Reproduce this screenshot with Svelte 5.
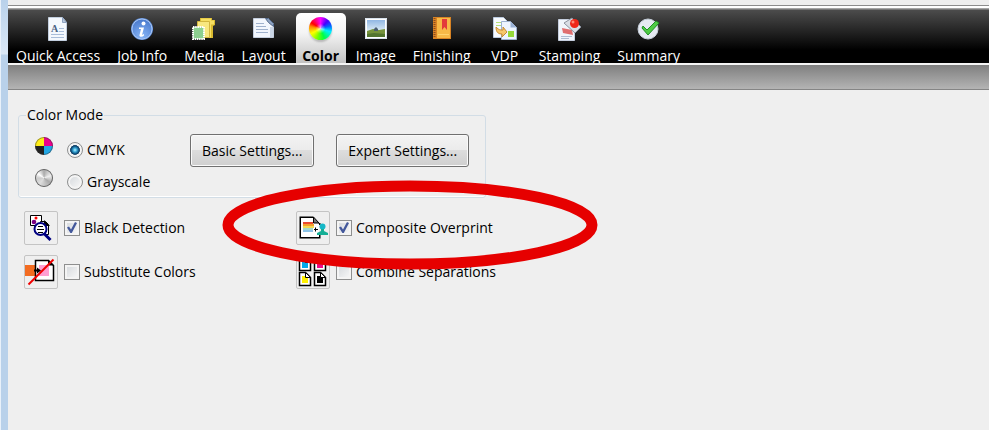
<script lang="ts">
	type Tab = { id: string; label: string }
	type Feature = { id: string; label: string }

	const tabs: Tab[] = [
		{ id: 'quick', label: 'Quick Access' },
		{ id: 'job', label: 'Job Info' },
		{ id: 'media', label: 'Media' },
		{ id: 'layout', label: 'Layout' },
		{ id: 'color', label: 'Color' },
		{ id: 'image', label: 'Image' },
		{ id: 'finishing', label: 'Finishing' },
		{ id: 'vdp', label: 'VDP' },
		{ id: 'stamping', label: 'Stamping' },
		{ id: 'summary', label: 'Summary' }
	]

	const features: Feature[] = [
		{ id: 'black', label: 'Black Detection' },
		{ id: 'overprint', label: 'Composite Overprint' },
		{ id: 'substitute', label: 'Substitute Colors' },
		{ id: 'separations', label: 'Combine Separations' }
	]

	let active = $state('color')
	let mode = $state('cmyk')
	let enabled = $state<Record<string, boolean>>({
		black: true,
		overprint: true,
		substitute: false,
		separations: false
	})
</script>

{#snippet tabIcon(id: string)}
	<svg viewBox="0 0 24 24" aria-hidden="true">
		{#if id === 'quick'}
			<path d="M2.5 .5h14l4 5v18h-18z" fill="#f4f8fd" stroke="#c3cfdf" />
			<path d="M16.5 .5v5h4z" fill="#b9c9df" stroke="#8fa3c0" />
			<text x="5" y="15" font-family="Liberation Serif, serif" font-size="10" font-weight="bold" fill="#4b6384">A</text>
			<path d="M13 11.5h5M13 14.5h5M5 17.5h13M5 20.5h13" stroke="#a9bdd9" />
		{:else if id === 'job'}
			<circle cx="12" cy="12" r="11" fill="#5f8fdb" />
			<circle cx="12" cy="12" r="10" fill="url(#info)" stroke="#a9c6f4" />
			<circle cx="13.5" cy="6.5" r="2" fill="#fff" />
			<path d="M9 10.5h5l-2 7.5 2-1v1.5c-2 2-5 1.5-4.5-.5l1.5-6H9z" fill="#fff" />
		{:else if id === 'media'}
			<path d="M8 1h12v2h3v5l-2 1v12H8z" fill="#d8b92f" />
			<path d="M9 1.5h10v2h3v4h-3v13H9z" fill="#f6df63" />
			<path d="M5.5 4.5h12v16h-12z" fill="#f8e780" stroke="#d2b640" />
			<path d="M1 10h11v12H1z" fill="#8ccf8f" />
			<path d="M1 10h11v12H1z" fill="none" stroke="#fff" stroke-width="2" stroke-dasharray="1.5 .7" />
		{:else if id === 'layout'}
			<path d="M1.5 1.5h15l5 5v14h-20z" fill="#f2f6fd" stroke="#c4cede" />
			<path d="M13.500 1.5h3l5 5v3l-5-4z" fill="#8da2c1" stroke="#53698a" />
			<path d="M4 6.5h8M4 9.5h10M4 12.5h12M4 15.500h12" stroke="#9fb1cd" />
			<path d="M19.5 10v10" stroke="#cbd6e6" stroke-width="3" />
		{:else if id === 'image'}
			<path d="M1 1h22v21H1z" fill="#fff" />
			<path d="M3 3h18v11H3z" fill="url(#sky)" />
			<path d="M3 14l6-2 6 1 6-1v8H3z" fill="#76933c" />
			<path d="M3 17l7-1 11 1v3H3z" fill="#52752f" />
			<path d="M10 14v-2l2-2 2 2v2z" fill="#4a5f70" />
			<path d="M1.5 1.5h21v20h-21z" fill="none" stroke="#d8e2ec" />
		{:else if id === 'finishing'}
			<path d="M3 0h18v22H3z" fill="#d98424" />
			<path d="M7 1h13v20H7z" fill="#f7b947" />
			<path d="M4.5 1v20" stroke="#8c4a1d" stroke-width="2" stroke-dasharray="1 1" />
			<path d="M8 17.5h11" stroke="#ffd36f" />
			<path d="M12 2h5v11l-2.500-3L12 13z" fill="#e33b3b" />
		{:else if id === 'vdp'}
			<path d="M.5 .5h10l4 4v16H.5z" fill="#f8fbff" stroke="#bccbe0" />
			<path d="M3 5.5h6M3 8.5h5" stroke="#b7e079" />
			<path d="M8.5 4.500h9l6 6v12h-15z" fill="#edf4ff" stroke="#9eb2d0" />
			<path d="M17.5 4.5v6h6z" fill="#9ab1d5" />
			<path d="M15 14h6v6h-6z" fill="#96d93c" />
			<path d="M3 10c0 6 3 7 6 7v3l5-5-4-5v3c-3 0-4 0-7-3z" fill="#f6c76c" stroke="#c78b31" />
		{:else if id === 'stamping'}
			<path d="M1.5 2.5h16v21h-16z" fill="#f1f5fb" stroke="#c5cede" />
			<path d="M5 11l10 2 1 5-10-2z" fill="#e06f6f" />
			<path d="M4 19.500h11M4 21.500h8" stroke="#aebdd2" />
			<path d="M7 6l8-5 9 9-6 6z" fill="#d9dde4" stroke="#8b929f" />
			<circle cx="17.5" cy="6.5" r="4.5" fill="#ef2718" />
			<circle cx="16" cy="5" r="1.5" fill="#ff8b76" />
		{:else if id === 'summary'}
			<circle cx="11" cy="12" r="10" fill="#e6eaf2" stroke="#c4cdd8" />
			<path d="M6 9l4 4 9-9 3 2-11 12-6-7z" fill="#4ecb45" stroke="#218d27" />
		{/if}
	</svg>
{/snippet}

{#snippet featureIcon(id: string)}
	<svg viewBox="0 0 32 32" aria-hidden="true">
		{#if id === 'black'}
			<path d="M5.5 3.5h11v10h-11z" fill="#fff" stroke="#000" />
			<path d="M15.5 9.5h5l3 3v10h-8z" fill="#fff" stroke="#000" />
			<path d="M19 8l6 6h-6z" />
			<circle cx="11" cy="6" r="1.5" fill="#f00" />
			<circle cx="9" cy="10" r="2.3" fill="#7b0084" />
			<path d="M19 21.500l6.500 6.500" stroke="#000080" stroke-width="3" />
			<circle cx="15.5" cy="17" r="6" fill="#fff" stroke="#000080" stroke-width="2" />
			<path d="M13 14.5h5M12 17.5h7M13 20.500h5" stroke="#000" />
		{:else if id === 'overprint'}
			<path d="M22.5 11v2M22.500 22v3.500h-19v-20h13" fill="none" stroke="#000" stroke-width="2" />
			<path d="M4 6h12l6 6v13H4z" fill="#fff" />
			<path d="M16.5 5l5.500 6h-5.500z" fill="#777" stroke="#000" />
			<path d="M6 10h10v2H6z" fill="#e94b32" />
			<path d="M6 12h11v2H6z" fill="#f5a12c" />
			<path d="M6 14h11v2H6z" fill="#f1db55" />
			<path d="M6 16h10v2H6z" fill="#a4dacc" />
			<path d="M6 18h10v2H6z" fill="#8bc3e7" />
			<path d="M17 17.500h4M18.500 15.500v4" stroke="#000" />
			<g fill="#15b7c7">
				<circle cx="25.500" cy="14.500" r="3" />
				<path d="M24 17h3v2l4 2v2H20v-2l4-2z" fill="#16af96" />
			</g>
		{:else if id === 'substitute'}
			<path d="M0 9h12v11H0z" fill="#f36c21" />
			<path d="M10.5 4.5h13l5 5v15h-18z" fill="#fff" stroke="#000" stroke-width="1.5" />
			<path d="M23 4v5.5h6z" />
			<path d="M14 9h10v11H14z" fill="#ff9fd2" />
			<path d="M9 14.5h4" stroke="#000" stroke-width="2" />
			<path d="M12 11.500l4 3-4 3z" />
			<path d="M3.5 28.5l25-25" stroke="#f00000" stroke-width="2" />
		{:else}
			{#each [['#00a9ec', 2, 1], ['#ed0b86', 17, 1], ['#fff000', 2, 16], ['#000', 17, 16]] as [fill, x, y]}
				<g transform="translate({x} {y})">
					<path d="M.5 .5h6l5 5v8H.5z" fill="#fff" stroke="#000" stroke-width="1.5" />
					<path d="M3 4h6v7H3z" {fill} />
					<path d="M6.5 .5v5h5z" fill="#fff" stroke="#000" />
				</g>
			{/each}
		{/if}
	</svg>
{/snippet}

<!-- shared gradients for the tab icons -->
<svg class="defs" aria-hidden="true">
	<defs>
		<radialGradient id="info" cx="50%" cy="85%" r="85%">
			<stop offset="0" stop-color="#87b5f7" />
			<stop offset="1" stop-color="#4778cc" />
		</radialGradient>
		<linearGradient id="sky" x1="0" y1="0" x2="0" y2="1">
			<stop offset="0" stop-color="#91b7e3" />
			<stop offset="1" stop-color="#dcecf6" />
		</linearGradient>
	</defs>
</svg>

<div class="window">
	<nav class="toolbar">
		{#each tabs as tab}
			<button
				type="button"
				class="tab"
				class:active={active === tab.id}
				aria-pressed={active === tab.id}
				onclick={() => (active = tab.id)}
			>
				{#if tab.id === 'color'}
					<span class="wheel"></span>
				{:else}
					{@render tabIcon(tab.id)}
				{/if}
				<span>{tab.label}</span>
			</button>
		{/each}
	</nav>
	<div class="subbar"></div>

	<main>
		<fieldset>
			<legend>Color Mode</legend>
			<div class="modes">
				<label>
					<span class="swatch cmyk"></span>
					<input type="radio" name="mode" value="cmyk" bind:group={mode} />
					CMYK
				</label>
				<label>
					<span class="swatch gray"></span>
					<input type="radio" name="mode" value="gray" bind:group={mode} />
					Grayscale
				</label>
			</div>
			<div class="settings">
				<button type="button">Basic Settings...</button>
				<button type="button">Expert Settings...</button>
			</div>
		</fieldset>

		<div class="features">
			{#each features as feature}
				<div class="feature">
					<button type="button" class="tool" aria-label={feature.label}>
						{@render featureIcon(feature.id)}
					</button>
					<label>
						<input type="checkbox" bind:checked={enabled[feature.id]} />
						{feature.label}
					</label>
				</div>
			{/each}
		</div>

		<svg class="marker" viewBox="0 0 376 90" aria-hidden="true">
			<ellipse cx="188" cy="45" rx="182" ry="39" />
		</svg>
	</main>
</div>

<style>
	:global(body) { margin: 0; background: #efefef; }

	.defs { position: absolute; width: 0; height: 0; }

	.window {
		box-sizing: border-box; min-height: 100vh; padding: 5px 0 0 8px;
		background:
			linear-gradient(#e9f1fa, #e9f1fa) 0 0 / 1px 100% no-repeat,
			linear-gradient(#b9d1ea 0, #dbe8f6 54px, #b9d1ea 55px) 0 0 / 8px 100% no-repeat,
			#efefef;
		font-family: "Open Sans", "Noto Sans", sans-serif; font-size: 14px; line-height: 20px; color: #000;
	}
	button { font: inherit; color: inherit; cursor: pointer; }

	.toolbar {
		display: flex; align-items: flex-end; gap: 1px; height: 57px;
		border-top: 1px solid #8d8d8d; border-bottom: 2px solid #f4f4f4;
		background: linear-gradient(#fff 2px, #a5a5a5 2px, #a5a5a5 3px, #4c4c4c 4px, #000 44px);
	}
	.tab {
		display: flex; flex-direction: column; align-items: center; justify-content: space-between;
		box-sizing: border-box; height: 50px; min-width: 50px; padding: 4px 8px 0;
		border: 0; border-radius: 5px 5px 0 0; background: none; color: #fff;
		line-height: 14px; white-space: nowrap;
	}
	.tab svg { width: 24px; height: 24px; }
	.tab span { display: block; }
	.tab.active {
		margin: 0 1px; padding-inline: 6px;
		background: linear-gradient(#fff, #f4f4f4 40%, #c2c2c2); color: #000; font-weight: 700;
	}
	.wheel {
		width: 23px; height: 23px; border-radius: 50%;
		background:
			radial-gradient(circle, rgba(255, 255, 255, 0.7), transparent 30%),
			conic-gradient(#f0f, #40f 12%, #06f 21%, #0ef 30%, #0f4 44%, #7f0 55%, #ff0 67%, #f80 78%, #f00 84%, #f08 92%, #f0f);
		box-shadow: 0 2px 2px rgba(0, 0, 0, 0.2);
	}

	.subbar { height: 24px; border-bottom: 1px solid #858585; background: linear-gradient(#7f7f7f, #b4b4b4); }

	main { position: relative; padding: 15px 10px; }

	fieldset {
		display: flex; gap: 40px; box-sizing: border-box; width: 468px; max-width: 100%; min-width: 0;
		margin: 0; padding: 9px 15px 3px;
		border: 1px solid #d2dde6; border-radius: 3px; box-shadow: inset 0 -1px #fff;
	}
	legend { margin-left: -8px; padding: 0 1px; }

	.modes { display: flex; flex-direction: column; gap: 8px; width: 116px; padding-top: 4px; }
	.modes label { display: flex; align-items: center; height: 24px; white-space: nowrap; }
	.swatch { flex: none; width: 18px; height: 18px; margin: 0 14px 8px 1px; border-radius: 50%; }
	.cmyk { background: conic-gradient(#ec008c 25%, #22a7e5 0 50%, #222 0 75%, #ffed16 0); box-shadow: inset 0 0 0 1px rgba(50, 50, 50, 0.5); }
	.gray { background: conic-gradient(#aaa, #eee 20%, #aaa 35%, #ddd 60%, #ccc 75%, #fff 85%, #aaa); box-shadow: inset 0 0 0 1px #666; }

	input {
		appearance: none; box-sizing: border-box; flex: none; width: 16px; height: 16px; margin: 0 4px 0 0;
		border: 1px solid #8e8f8f; background: linear-gradient(135deg, #d3d7db, #fafafa);
		box-shadow: inset 0 0 0 2px #f4f4f4;
	}
	input[type="radio"] { border-radius: 50%; }
	input[type="radio"]:checked {
		background: radial-gradient(circle at 50% 50%, #b9f2ff 0, #35a6d6 2px, #0b4774 4px, #123a5b 5px, #e9eef2 5px);
	}
	input[type="checkbox"]::before {
		content: ""; display: block; width: 10px; height: 11px; margin: 1px 2px;
		clip-path: polygon(0 50%, 20% 40%, 40% 68%, 80% 0, 100% 8%, 48% 100%, 34% 100%);
	}
	input[type="checkbox"]:checked::before { background: #43589b; }

	.settings { display: flex; align-items: flex-start; gap: 22px; }
	.settings button {
		height: 33px; padding: 0 11px; border: 1px solid #707070; border-radius: 3px; white-space: nowrap;
		background: linear-gradient(#f3f3f3, #ebebeb 50%, #dddddd 50%, #cfcfcf); box-shadow: inset 0 0 0 1px #fafafa;
	}

	.features { display: grid; grid-template-columns: 272px 1fr; row-gap: 10px; padding: 13px 6px; }
	.feature { display: flex; align-items: center; gap: 6px; }
	.feature label { display: flex; align-items: center; white-space: nowrap; }
	.tool { width: 34px; height: 34px; padding: 0; border: 1px solid #c4c4c4; border-radius: 2px; background: #efefef; }
	.tool svg { display: block; width: 32px; height: 32px; }

	/* red ring drawn over the highlighted option */
	.marker { position: absolute; left: 214px; top: 90px; width: 376px; height: 90px; pointer-events: none; }
	.marker ellipse { fill: none; stroke: #e60000; stroke-width: 11; }
</style>
